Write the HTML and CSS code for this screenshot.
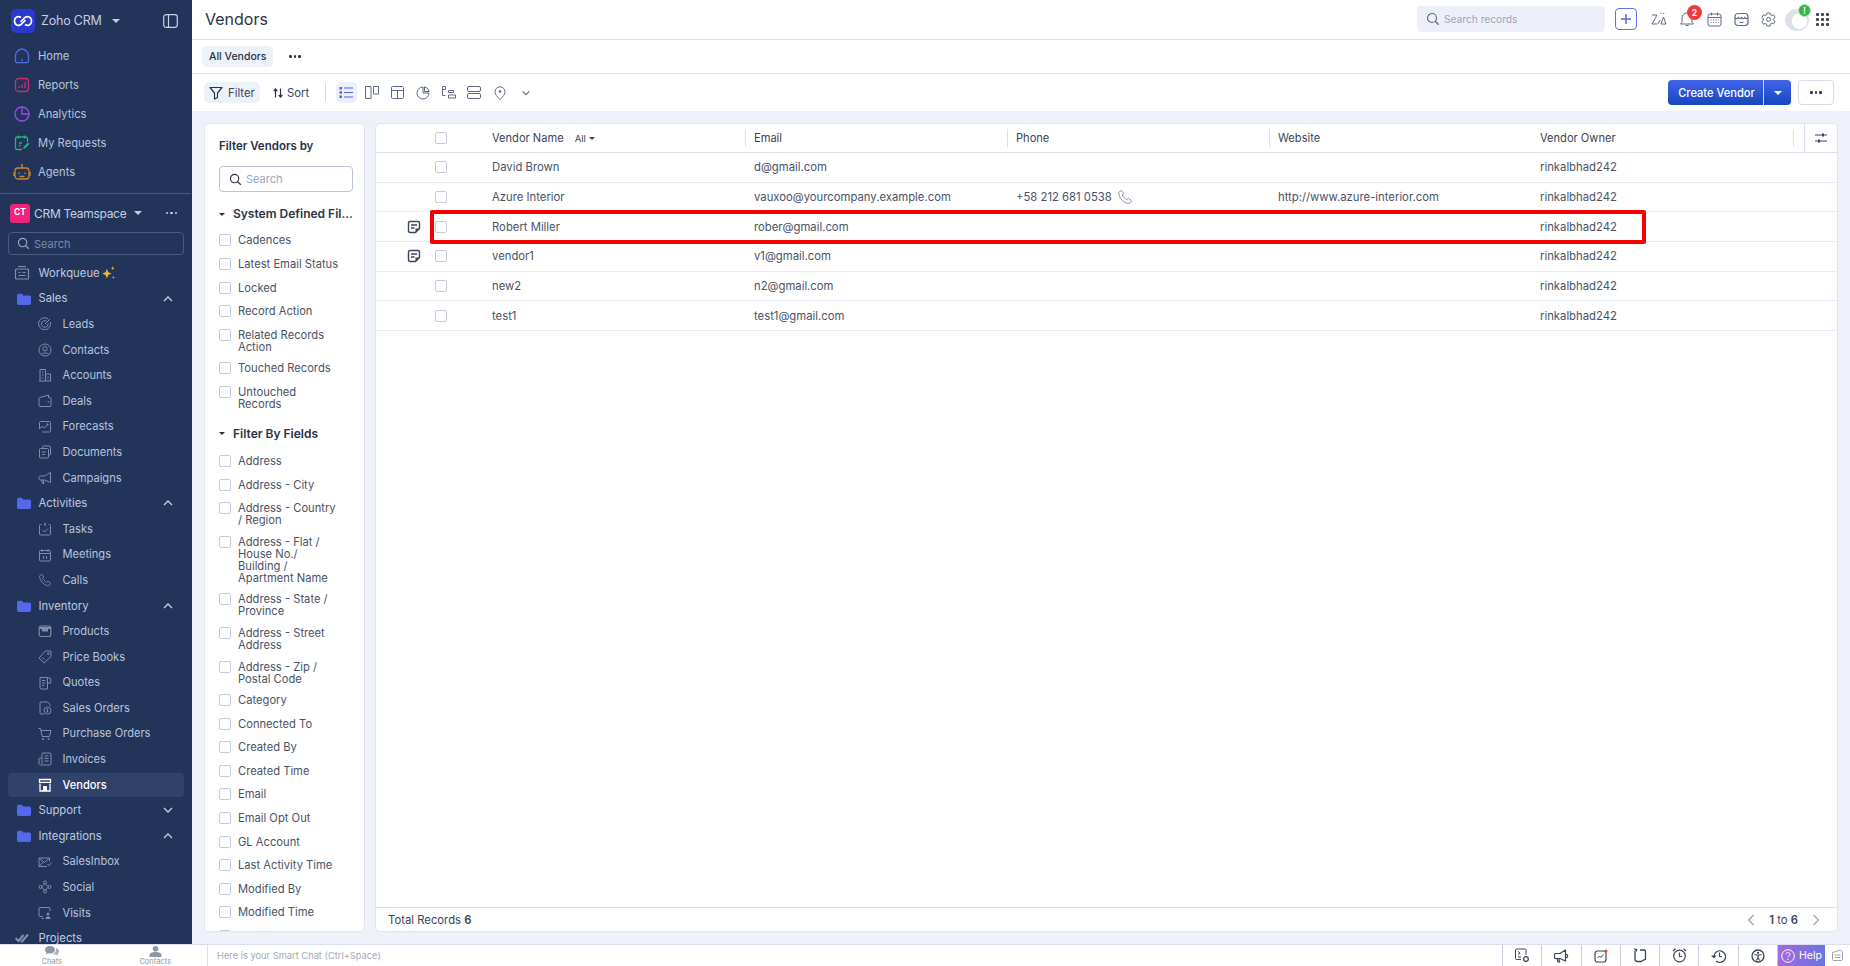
FILE: index.html
```html
<!DOCTYPE html>
<html lang="en">
<head>
<meta charset="utf-8">
<title>Vendors - Zoho CRM</title>
<link rel="stylesheet" href="styles.css">
</head>
<body>
<svg class="defs" width="0" height="0">
<defs>
<symbol id="folder" viewBox="0 0 16 16"><path fill="currentColor" d="M1 4.500c0-1 .6-1.700 1.600-1.700h3.200l1.500 1.600h6c1 0 1.700.7 1.700 1.700v6.200c0 1-.7 1.700-1.700 1.700H2.700c-1 0-1.700-.7-1.700-1.700z"/></symbol>
<symbol id="up" viewBox="0 0 12 12"><path fill="none" stroke="currentColor" stroke-width="1.300" d="M2 8l4-4 4 4"/></symbol>
<symbol id="down" viewBox="0 0 12 12"><path fill="none" stroke="currentColor" stroke-width="1.300" d="M2 4l4 4 4-4"/></symbol>
<symbol id="note" viewBox="0 0 14 14"><path fill="none" stroke="currentColor" stroke-width="1.400" stroke-linejoin="round" d="M3 1.500h8c1 0 1.500.6 1.500 1.500v5.500l-4 4H3c-1 0-1.500-.5-1.500-1.500V3c0-.9.5-1.500 1.500-1.500z"/><path fill="none" stroke="currentColor" stroke-width="1.400" d="M4 5h6M4 8h3.500"/><path fill="currentColor" d="M8.500 12.500V8.500h4z"/></symbol>
<symbol id="search" viewBox="0 0 14 14"><circle cx="6" cy="6" r="4.500" fill="none" stroke="currentColor" stroke-width="1.200"/><path stroke="currentColor" stroke-width="1.300" d="M9.300 9.300l3.400 3.400"/></symbol>
<symbol id="phone" viewBox="0 0 16 16"><path fill="none" stroke="currentColor" d="M2.500 2.500l2-1 2.200 3-1.400 1.500c.8 2 2.500 3.700 4.500 4.600l1.600-1.300 3 2.300-1 2c-.5.8-1.500 1-2.500.8C6.500 13.500 2.800 9.500 1.800 5c-.2-1 .1-2 .7-2.500z"/></symbol>
</defs>
</svg>
<div class="app">
<div class="shell">
<aside class="sidebar">
  <div class="brand">
    <span class="logo"><svg width="24" height="24" viewBox="0 0 24 24"><g fill="none" stroke="#fff" stroke-width="1.700"><path d="M10 8.500C7 6.500 3.500 8 3.500 12s4 5.500 6.500 3.500l4.500-4.500"/><path d="M14 15.500c3 2 6.500.5 6.500-3.500s-4-5.500-6.500-3.500L9.500 13"/></g></svg></span>
    <span class="brand-name">Zoho CRM</span>
    <span class="caret-light"></span>
    <svg class="panel-icon" width="15" height="14" viewBox="0 0 15 14"><rect x=".7" y=".7" width="13.600" height="12.600" rx="2.500" fill="none" stroke="#c9d2e6" stroke-width="1.200"/><path d="M5.500 1v12" stroke="#c9d2e6" stroke-width="1.200"/></svg>
  </div>
  <nav class="top-nav">
    <a class="top-item"><svg class="ic18 c-home" viewBox="0 0 18 18"><path fill="none" stroke="currentColor" stroke-width="1.300" d="M2.500 8.500C2.500 5 6 2 9 2s6.500 3 6.500 6.500V14c0 1-.8 1.700-1.700 1.700H4.200c-1 0-1.700-.7-1.700-1.700zM8 13h2"/></svg>Home</a>
    <a class="top-item"><svg class="ic18 c-rep" viewBox="0 0 18 18"><rect x="2.500" y="2.500" width="13" height="13" rx="3" fill="none" stroke="currentColor" stroke-width="1.300"/><path stroke="currentColor" stroke-width="1.300" d="M6 12v-2M9 12V8.500M12 12V6"/></svg>Reports</a>
    <a class="top-item"><svg class="ic18 c-ana" viewBox="0 0 18 18"><path fill="none" stroke="currentColor" stroke-width="1.300" d="M9 2a7 7 0 1 0 7 7H9z"/><path fill="none" stroke="currentColor" stroke-width="1.300" d="M9 2a7 7 0 0 1 7 7"/></svg>Analytics</a>
    <a class="top-item"><svg class="ic18 c-req" viewBox="0 0 18 18"><path fill="none" stroke="currentColor" stroke-width="1.300" d="M9 15.500H4.500C3.500 15.500 2.500 15 2.500 14V4.500c0-1 1-1.500 2-1.500h8c1 0 2 .5 2 1.500V8M5.500 1.500v3M11.500 1.500v3M6 9h3M6 11.500h1.500"/><path fill="currentColor" d="M10 15l.5-2 4.500-4.500 1.500 1.500-4.500 4.500z"/></svg>My Requests</a>
    <a class="top-item"><svg class="ic18 c-agt" viewBox="0 0 18 18"><rect x="2" y="5" width="14" height="11" rx="3" fill="none" stroke="currentColor" stroke-width="1.300"/><path stroke="currentColor" stroke-width="1.300" d="M9 5V2.500M1 9v4M17 9v4M6 9.500v1.500M12 9.500v1.500M6.500 13.500h5"/><circle cx="9" cy="2" r="1" fill="currentColor"/></svg>Agents</a>
  </nav>
  <div class="team">
    <span class="team-badge">CT</span>
    <span class="team-name">CRM Teamspace</span>
    <span class="caret-light small"></span>
    <span class="dots light"><i></i><i></i><i></i></span>
  </div>
  <div class="side-search"><svg width="13" height="13" class="s-icon"><use href="#search"/></svg>Search</div>
  <nav class="tree">
    <a class="row head"><svg class="ic16 gray" viewBox="0 0 16 16"><path fill="none" stroke="currentColor" stroke-width="1.200" d="M4 1.500h8M2.500 4h11c.6 0 1 .4 1 1v8c0 .6-.4 1-1 1h-11c-.6 0-1-.4-1-1V5c0-.6.400-1 1-1zM4.500 7.500h2M8.500 7.500h3M4.500 10.500h7"/></svg>Workqueue<svg class="spark" width="15" height="15" viewBox="0 0 14 14"><path fill="#e8b923" d="M5.500 3.500l1.300 3.200 3.200 1.300-3.200 1.300-1.300 3.200-1.300-3.200L1 8l3.200-1.300zM11 1l.5 1.500L13 3l-1.500.5L11 5l-.5-1.500L9 3l1.500-.5zM11.500 10l.4 1.100 1.100.4-1.100.4-.4 1.100-.4-1.100-1.100-.4 1.100-.4z"/></svg></a>

    <a class="row head"><svg class="folder"><use href="#folder"/></svg>Sales<svg class="chev"><use href="#up"/></svg></a>
    <a class="row sub"><svg class="ic14" viewBox="0 0 14 14"><path fill="none" stroke="currentColor" d="M10 1.800A6 6 0 1 0 12.300 5M8.500 4.200A3.300 3.300 0 1 0 10 6.500M7 7l5-5"/></svg>Leads</a>
    <a class="row sub"><svg class="ic14" viewBox="0 0 14 14"><circle cx="7" cy="7" r="6" fill="none" stroke="currentColor"/><circle cx="7" cy="5.800" r="2.200" fill="none" stroke="currentColor"/><path fill="none" stroke="currentColor" d="M3.200 11.500c1-2 6.600-2 7.600 0"/></svg>Contacts</a>
    <a class="row sub"><svg class="ic14" viewBox="0 0 14 14"><path fill="none" stroke="currentColor" d="M1 13h12M2 13V1.500h5.500V13M7.500 6H12.500V13M4 4h1.500M4 7h1.500M4 10h1.500M9.500 8.500h1M9.500 10.500h1"/></svg>Accounts</a>
    <a class="row sub"><svg class="ic14" viewBox="0 0 14 14"><path fill="none" stroke="currentColor" d="M1 4.500c0-.6.500-1 1-1l8.500-2.500v2.500H12c.6 0 1 .5 1 1v7c0 .6-.4 1-1 1H2c-.6 0-1-.4-1-1z"/><circle cx="10.300" cy="8" r=".8" fill="currentColor"/></svg>Deals</a>
    <a class="row sub"><svg class="ic14" viewBox="0 0 14 14"><path fill="none" stroke="currentColor" d="M1.500 9V2.500c0-.6.400-1 1-1h9c.6 0 1 .4 1 1v8.500c0 .6-.4 1-1 1H4M1 9l3-2.500L6.500 8 10 4M8.500 4H10v1.500"/></svg>Forecasts</a>
    <a class="row sub"><svg class="ic14" viewBox="0 0 14 14"><path fill="none" stroke="currentColor" d="M4.500 3V2c0-.5.400-1 1-1h6c.6 0 1 .5 1 1v7c0 .6-.4 1-1 1h-1M2.500 3.500h7c.6 0 1 .4 1 1V12c0 .6-.4 1-1 1h-7c-.6 0-1-.4-1-1V4.500c0-.6.400-1 1-1zM4 7h4M4 9.500h3"/></svg>Documents</a>
    <a class="row sub"><svg class="ic14" viewBox="0 0 14 14"><path fill="none" stroke="currentColor" stroke-linejoin="round" d="M12.500 1.500v10L6.500 9H2.500c-.8 0-1.500-.6-1.500-1.500v-1C1 5.600 1.700 5 2.500 5h4zM3.500 9l1 3.500H6L5.200 9"/></svg>Campaigns</a>

    <a class="row head"><svg class="folder"><use href="#folder"/></svg>Activities<svg class="chev"><use href="#up"/></svg></a>
    <a class="row sub"><svg class="ic14" viewBox="0 0 14 14"><path fill="none" stroke="currentColor" d="M3.500 2.500H2.500c-.6 0-1 .4-1 1V12c0 .6.400 1 1 1h9c.6 0 1-.4 1-1V3.500c0-.6-.4-1-1-1h-1M4.500 8l2 2 3.500-3.500"/><path stroke="currentColor" stroke-width="1.400" d="M7 .8v3"/></svg>Tasks</a>
    <a class="row sub"><svg class="ic14" viewBox="0 0 14 14"><rect x="1.500" y="2.500" width="11" height="10.500" rx="1" fill="none" stroke="currentColor"/><path fill="none" stroke="currentColor" d="M1.500 5.500h11M4 1v3M10 1v3M5.500 8v3M8.500 8v3"/></svg>Meetings</a>
    <a class="row sub"><svg class="ic14" viewBox="0 0 16 16"><use href="#phone"/></svg>Calls</a>

    <a class="row head"><svg class="folder"><use href="#folder"/></svg>Inventory<svg class="chev"><use href="#up"/></svg></a>
    <a class="row sub"><svg class="ic14" viewBox="0 0 14 14"><rect x="1.200" y="2" width="11.600" height="10.500" rx="2" fill="none" stroke="currentColor" stroke-width="1.200"/><path fill="currentColor" d="M1.500 3h11v2h-2.500v2.500H4V5H1.500z"/></svg>Products</a>
    <a class="row sub"><svg class="ic14" viewBox="0 0 14 14"><path fill="none" stroke="currentColor" stroke-linejoin="round" d="M7.500 1H13v5.500L6 13 1 8zM4.500 7.500l2 2"/><circle cx="10.300" cy="3.700" r=".9" fill="none" stroke="currentColor"/></svg>Price Books</a>
    <a class="row sub"><svg class="ic14" viewBox="0 0 14 14"><path fill="none" stroke="currentColor" d="M2 1.500h7.500V13H3c-.6 0-1-.4-1-1zM9.500 2H12c.6 0 .8.400.8 1v4H9.500M4 4.500h3.500M4 7h3.500M4 9.500h2"/></svg>Quotes</a>
    <a class="row sub"><svg class="ic14" viewBox="0 0 14 14"><path fill="none" stroke="currentColor" d="M6 13H3c-.6 0-1-.4-1-1V2c0-.6.400-1 1-1h6.500L12 3.500V5"/><circle cx="9.500" cy="9.500" r="3.500" fill="none" stroke="currentColor"/><path stroke="currentColor" stroke-width=".9" d="M9.500 7.500v4M8.500 8.600h1.700M8.600 10.400h1.700"/></svg>Sales Orders</a>
    <a class="row sub"><svg class="ic14" viewBox="0 0 14 14"><path fill="none" stroke="currentColor" d="M.5 1.500h2L4.200 9.500h7.300L13 3.500H3"/><circle cx="5" cy="12" r="1" fill="currentColor"/><circle cx="10.500" cy="12" r="1" fill="currentColor"/></svg>Purchase Orders</a>
    <a class="row sub"><svg class="ic14" viewBox="0 0 14 14"><path fill="none" stroke="currentColor" d="M4 6V2c0-.6.400-1 1-1h7c.6 0 1 .4 1 1v10c0 .6-.4 1-1 1H3c-1 0-2-.6-2-1.500V7c0-.6.400-1 1-1h2v6M6.500 4h4M6.500 6.500h4M6.500 9h4"/></svg>Invoices</a>
    <a class="row sub active"><svg class="ic14" viewBox="0 0 14 14"><path fill="none" stroke="currentColor" stroke-width="1.300" d="M2 5.500V13h10V5.500M.8 1.500h12.400M1.500 1.500v2.800h11V1.500"/><path fill="currentColor" d="M5 8h4v5H5z"/></svg>Vendors</a>

    <a class="row head"><svg class="folder"><use href="#folder"/></svg>Support<svg class="chev"><use href="#down"/></svg></a>
    <a class="row head"><svg class="folder"><use href="#folder"/></svg>Integrations<svg class="chev"><use href="#up"/></svg></a>
    <a class="row sub"><svg class="ic14" viewBox="0 0 14 14"><path fill="none" stroke="currentColor" d="M1 3h10.500v3M1 3v8.500h8M1 3l5.500 4.500L11.500 3M1 11.500l4-4.500M9.500 9l1.500 1.500 2.500-3"/></svg>SalesInbox</a>
    <a class="row sub"><svg class="ic14" viewBox="0 0 14 14"><path fill="none" stroke="currentColor" d="M7 3.500L10.500 7 7 10.500 3.500 7z"/><circle cx="7" cy="2.500" r="1.500" fill="none" stroke="currentColor"/><circle cx="7" cy="11.500" r="1.500" fill="none" stroke="currentColor"/><circle cx="2.500" cy="7" r="1.500" fill="none" stroke="currentColor"/><circle cx="11.500" cy="7" r="1.500" fill="none" stroke="currentColor"/></svg>Social</a>
    <a class="row sub"><svg class="ic14" viewBox="0 0 14 14"><path fill="none" stroke="currentColor" d="M5 10.500H2c-.6 0-1-.4-1-1V2.500c0-.6.400-1 1-1h9c.6 0 1 .4 1 1v2.500M3.500 12.500H6"/><circle cx="10" cy="8" r="1.500" fill="currentColor"/><path fill="currentColor" d="M7.500 13c0-2 1-2.500 2.500-2.500s2.500.5 2.500 2.500z"/></svg>Visits</a>
    <a class="row head"><svg class="ic16 gray" viewBox="0 0 16 16"><path fill="none" stroke="currentColor" stroke-width="2" d="M1.500 8l3 3 5-6M7 10.500l1 1 6-7"/></svg>Projects</a>
  </nav>
</aside>

<main class="main">
  <header class="topbar">
    <h1 class="title">Vendors</h1>
    <div class="top-search"><svg width="14" height="14" class="ts-icon"><use href="#search"/></svg>Search records</div>
    <span class="plus"><svg width="12" height="12" viewBox="0 0 12 12"><path stroke="#5368e8" stroke-width="1.500" d="M6 1v10M1 6h10"/></svg></span>
    <div class="top-icons">
      <svg width="16" height="14" viewBox="0 0 16 14"><path fill="none" stroke="currentColor" d="M1 3h5L1 12h5M10 12l2.500-7 2.500 7zM7 12l2-4M9.500 1l1 1M13 1l-.5 1"/></svg>
      <span class="bell"><svg width="16" height="16" viewBox="0 0 16 16"><path fill="none" stroke="currentColor" d="M3 11.500V7a5 5 0 0 1 10 0v4.500l1.500 1.500h-13zM6.500 14.500h3"/></svg><b class="badge">2</b></span>
      <svg width="15" height="15" viewBox="0 0 15 15"><rect x="1" y="2" width="13" height="12" rx="2" fill="none" stroke="currentColor"/><path fill="none" stroke="currentColor" d="M1 5.500h13M4.500 .5v3M10.500 .5v3"/><path stroke="currentColor" stroke-dasharray="1 1.500" d="M3.500 8h8M3.500 10.500h8"/></svg>
      <svg width="15" height="15" viewBox="0 0 15 15"><rect x="1" y="1.500" width="13" height="12" rx="3" fill="none" stroke="currentColor" stroke-width="1.200"/><path fill="none" stroke="currentColor" stroke-width="1.200" d="M1 5.500c1 1.500 2.500 1.500 3.200 0 .8 1.500 2.500 1.500 3.300 0 .8 1.500 2.500 1.500 3.300 0 .7 1.500 2.200 1.500 3.200 0M5.500 10.500h4"/></svg>
      <svg width="15" height="15" viewBox="0 0 15 15"><path fill="none" stroke="currentColor" stroke-linejoin="round" d="M6 1h3l.4 1.800 1.500.7 1.700-.7 1.500 2.500-1.400 1.200v1.600l1.400 1.200-1.500 2.500-1.700-.7-1.500.7L9 14H6l-.4-1.800-1.500-.7-1.700.7-1.500-2.500 1.400-1.200V6.900L.9 5.300l1.500-2.500 1.700.7 1.500-.7z"/><circle cx="7.500" cy="7.500" r="2" fill="none" stroke="currentColor"/></svg>
      <span class="avatar"><i class="avatar-shape"></i><b class="avatar-badge">!</b></span>
      <span class="apps"><i></i><i></i><i></i><i></i><i></i><i></i><i></i><i></i><i></i></span>
    </div>
  </header>

  <div class="viewbar">
    <span class="view-pill">All Vendors</span>
    <span class="dots"><i></i><i></i><i></i></span>
  </div>

  <div class="toolbar">
    <span class="tool-pill"><svg width="14" height="14" viewBox="0 0 14 14"><path fill="none" stroke="#2a3345" stroke-width="1.200" stroke-linejoin="round" d="M1 1.500h12L8.500 7v4.500l-3 1.500V7z"/></svg>Filter</span>
    <span class="tool-sort"><svg width="10" height="10" viewBox="0 0 10 10"><path fill="none" stroke="#2a3345" stroke-width="1.200" d="M2.500 9.500V1M.7 3l1.800-2 1.800 2M7.500 .5V9M5.700 7l1.800 2 1.800-2"/></svg>Sort</span>
    <span class="tool-sep"></span>
    <div class="views">
      <span class="view current"><svg width="14" height="13" viewBox="0 0 14 13"><path fill="#4f63e6" d="M.5 1h2.500v2.500H.5zM.5 5.200h2.500v2.500H.5zM.5 9.500h2.500V12H.5z"/><path stroke="#4f63e6" stroke-width="1.200" d="M5 2h9M5 6.500h9M5 11h9"/></svg></span>
      <span class="view"><svg width="14" height="13" viewBox="0 0 14 13"><path fill="none" stroke="#5e6a84" d="M.5.500h5.500v12H.5zM8.500.500H13.500v7.500H8.500z"/></svg></span>
      <span class="view"><svg width="13" height="13" viewBox="0 0 13 13"><rect x=".5" y=".5" width="12" height="12" rx="1" fill="none" stroke="#5e6a84"/><path stroke="#5e6a84" d="M.5 4.500h12M6.500 4.500v8"/></svg></span>
      <span class="view"><svg width="14" height="14" viewBox="0 0 14 14"><path fill="none" stroke="#5e6a84" d="M7 1a6 6 0 1 0 6 6H7zM8.500.8a6 6 0 0 1 4.700 4.700H8.500z"/></svg></span>
      <span class="view"><svg width="14" height="13" viewBox="0 0 14 13"><path fill="none" stroke="#5e6a84" d="M.5 1v8.500h3M.5 .5h3v3h-3zM6.500 4.500h5v2h-5zM6.500 9h7v3h-7z"/></svg></span>
      <span class="view"><svg width="14" height="13" viewBox="0 0 14 13"><rect x=".5" y=".5" width="13" height="5" rx="1.500" fill="none" stroke="#5e6a84"/><rect x=".5" y="7.500" width="13" height="5" rx="1.500" fill="none" stroke="#5e6a84"/></svg></span>
      <span class="view"><svg width="12" height="14" viewBox="0 0 12 14"><path fill="none" stroke="#5e6a84" d="M6 13.500C3 10.500 1 8.500 1 5.800a5 5 0 0 1 10 0c0 2.700-2 4.700-5 7.700z"/><circle cx="6" cy="5.500" r="1.300" fill="#5e6a84"/></svg></span>
      <span class="view"><svg width="10" height="10"><use href="#down"/></svg></span>
    </div>
    <div class="create">
      <span class="create-main">Create Vendor</span>
      <span class="create-arrow"><i></i></span>
    </div>
    <span class="more"><span class="dots"><i></i><i></i><i></i></span></span>
  </div>

  <div class="content">
    <section class="filters">
      <h2 class="f-title">Filter Vendors by</h2>
      <div class="f-search"><svg width="13" height="13"><use href="#search"/></svg>Search</div>
      <h3 class="f-group sys"><i class="caret-dark"></i>System Defined Fil...</h3>
      <label class="f-item"><i class="cb"></i><span>Cadences</span></label>
      <label class="f-item"><i class="cb"></i><span>Latest Email Status</span></label>
      <label class="f-item"><i class="cb"></i><span>Locked</span></label>
      <label class="f-item"><i class="cb"></i><span>Record Action</span></label>
      <label class="f-item"><i class="cb"></i><span>Related Records<br>Action</span></label>
      <label class="f-item"><i class="cb"></i><span>Touched Records</span></label>
      <label class="f-item"><i class="cb"></i><span>Untouched<br>Records</span></label>
      <h3 class="f-group fields"><i class="caret-dark"></i>Filter By Fields</h3>
      <label class="f-item"><i class="cb"></i><span>Address</span></label>
      <label class="f-item"><i class="cb"></i><span>Address - City</span></label>
      <label class="f-item"><i class="cb"></i><span>Address - Country<br>/ Region</span></label>
      <label class="f-item"><i class="cb"></i><span>Address - Flat /<br>House No./<br>Building /<br>Apartment Name</span></label>
      <label class="f-item"><i class="cb"></i><span>Address - State /<br>Province</span></label>
      <label class="f-item"><i class="cb"></i><span>Address - Street<br>Address</span></label>
      <label class="f-item"><i class="cb"></i><span>Address - Zip /<br>Postal Code</span></label>
      <label class="f-item"><i class="cb"></i><span>Category</span></label>
      <label class="f-item"><i class="cb"></i><span>Connected To</span></label>
      <label class="f-item"><i class="cb"></i><span>Created By</span></label>
      <label class="f-item"><i class="cb"></i><span>Created Time</span></label>
      <label class="f-item"><i class="cb"></i><span>Email</span></label>
      <label class="f-item"><i class="cb"></i><span>Email Opt Out</span></label>
      <label class="f-item"><i class="cb"></i><span>GL Account</span></label>
      <label class="f-item"><i class="cb"></i><span>Last Activity Time</span></label>
      <label class="f-item"><i class="cb"></i><span>Modified By</span></label>
      <label class="f-item"><i class="cb"></i><span>Modified Time</span></label>
      <label class="f-item"><i class="cb"></i><span>Phone</span></label>
    </section>

    <section class="table-card">
      <div class="t-row t-head">
        <span></span>
        <span><i class="cb"></i></span>
        <span class="name-head">Vendor Name<em class="all">All<i class="caret-mini"></i></em></span>
        <span class="th sep">Email</span>
        <span class="th sep">Phone</span>
        <span class="th">Website</span>
        <span class="th sep owner">Vendor Owner</span>
        <span class="cfg"><svg width="14" height="12" viewBox="0 0 14 12"><path stroke="#3b4458" d="M1 3h12M1 9h12"/><path fill="#3b4458" d="M8 1.500h2v3H8zM4 7.500h2v3H4z"/></svg></span>
      </div>
      <div class="t-body">
        <div class="t-row"><span></span><span><i class="cb"></i></span><span>David Brown</span><span class="td">d@gmail.com</span><span class="td"></span><span class="td"></span><span class="td">rinkalbhad242</span><span></span></div>
        <div class="t-row"><span></span><span><i class="cb"></i></span><span>Azure Interior</span><span class="td">vauxoo@yourcompany.example.com</span><span class="td">+58 212 681 0538<svg class="call" width="16" height="16"><use href="#phone"/></svg></span><span class="td">http://www.azure-interior.com</span><span class="td">rinkalbhad242</span><span></span></div>
        <div class="t-row"><span class="nt"><svg width="14" height="14"><use href="#note"/></svg></span><span><i class="cb"></i></span><span>Robert Miller</span><span class="td">rober@gmail.com</span><span class="td"></span><span class="td"></span><span class="td">rinkalbhad242</span><span></span></div>
        <div class="t-row"><span class="nt"><svg width="14" height="14"><use href="#note"/></svg></span><span><i class="cb"></i></span><span>vendor1</span><span class="td">v1@gmail.com</span><span class="td"></span><span class="td"></span><span class="td">rinkalbhad242</span><span></span></div>
        <div class="t-row"><span></span><span><i class="cb"></i></span><span>new2</span><span class="td">n2@gmail.com</span><span class="td"></span><span class="td"></span><span class="td">rinkalbhad242</span><span></span></div>
        <div class="t-row"><span></span><span><i class="cb"></i></span><span>test1</span><span class="td">test1@gmail.com</span><span class="td"></span><span class="td"></span><span class="td">rinkalbhad242</span><span></span></div>
      </div>
      <div class="t-foot">
        <span>Total Records <b>6</b></span>
        <span class="pager"><svg width="10" height="12" viewBox="0 0 10 12"><path fill="none" stroke="#9aa3b5" stroke-width="1.200" d="M7.500 1L2.500 6l5 5"/></svg><span class="pg"><b>1</b> to <b>6</b></span><svg width="10" height="12" viewBox="0 0 10 12"><path fill="none" stroke="#9aa3b5" stroke-width="1.200" d="M2.500 1l5 5-5 5"/></svg></span>
      </div>
      <div class="highlight"></div>
    </section>
  </div>
</main>
</div>

<footer class="bottom">
  <div class="b-left">
    <span class="b-tab"><svg width="14" height="11" viewBox="0 0 14 11"><path fill="#8e97a8" d="M5 0c3 0 5 1.500 5 3.700S8 7.500 5 7.500c-.7 0-1.400-.1-2-.3L.8 8.500l.6-2.200C.5 5.600 0 4.700 0 3.700 0 1.500 2 0 5 0z"/><path fill="#a5adbb" d="M11 2c2 .5 3 1.800 3 3.300 0 1-.5 1.800-1.300 2.400l.4 1.800-1.900-1.100c-1 .3-2.700.2-3.700-.4 2.500-.5 4-2.300 3.500-6z"/></svg>Chats</span>
    <span class="b-tab"><svg width="13" height="11" viewBox="0 0 13 11"><circle cx="6.500" cy="2.800" r="2.800" fill="#8e97a8"/><path fill="#8e97a8" d="M.5 11V9c0-2 2.500-3 6-3s6 1 6 3v2z"/></svg>Contacts</span>
  </div>
  <div class="b-chat">Here is your Smart Chat (Ctrl+Space)</div>
  <div class="b-tools">
    <span class="b-cell"><svg width="16" height="15" viewBox="0 0 16 15"><path fill="none" stroke="#3b4458" d="M7 11.500H2.500c-.6 0-1-.4-1-1V2c0-.6.400-1 1-1h8.500c.6 0 1 .4 1 1v5M4 3.500l2 1.500-2 1.500M4 9h3"/><circle cx="12" cy="11" r="2.300" fill="none" stroke="#3b4458" stroke-width="1.300"/></svg></span>
    <span class="b-cell"><svg width="16" height="14" viewBox="0 0 16 14"><path fill="none" stroke="#3b4458" stroke-width="1.200" stroke-linejoin="round" d="M12.500 1v11L7 9.500H2.500c-.6 0-1-.4-1-1v-3c0-.6.400-1 1-1H7zM4 9.500l1 3.500h1.500L6 9.500M12.500 5l2 1v2l-2 1"/></svg></span>
    <span class="b-cell"><svg width="14" height="14" viewBox="0 0 14 14"><rect x="1" y="2" width="11" height="11" rx="2.500" fill="none" stroke="#3b4458" stroke-width="1.200"/><path fill="none" stroke="#3b4458" d="M3.500 9L5.500 7l1.500 1.500L9.500 5.500"/><circle cx="12" cy="2" r="1.500" fill="#e8453c"/></svg></span>
    <span class="b-cell"><svg width="14" height="15" viewBox="0 0 14 15"><path fill="none" stroke="#3b4458" stroke-width="1.300" d="M2 3v8c0 1.500 1 2.500 2.500 2.500H8L12.500 11V3.500c0-1-.5-1.500-1.500-1.500H7"/><path fill="#3b4458" d="M.5 .5l4 .5-1 3z"/></svg></span>
    <span class="b-cell"><svg width="15" height="15" viewBox="0 0 15 15"><circle cx="7.500" cy="8" r="5.800" fill="none" stroke="#3b4458" stroke-width="1.200"/><path fill="none" stroke="#3b4458" d="M7.500 4.500V8.500H10M1 3l2.500-2.300M14 3L11.500 .7" stroke-width="1.200"/></svg></span>
    <span class="b-cell"><svg width="15" height="14" viewBox="0 0 15 14"><path fill="none" stroke="#3b4458" stroke-width="1.200" d="M3 7a5.800 5.800 0 1 1 2 5M8.500 3.500V7.500H11"/><path fill="#3b4458" d="M0 6.500h5.500L3 9.500z"/></svg></span>
    <span class="b-cell"><svg width="14" height="14" viewBox="0 0 14 14"><circle cx="7" cy="7" r="6" fill="none" stroke="#3b4458" stroke-width="1.300"/><circle cx="7" cy="3.800" r="1.100" fill="#3b4458"/><path fill="none" stroke="#3b4458" stroke-width="1.100" d="M3.500 5.500L7 6.300l3.500-.8M7 6.300V8.500L5.500 11.500M7 8.500l1.500 3"/></svg></span>
    <span class="help"><svg width="14" height="14" viewBox="0 0 14 14"><circle cx="7" cy="7" r="6.300" fill="none" stroke="#fff"/><path fill="none" stroke="#fff" d="M5 5.300C5 4 6 3.500 7 3.500S9 4.200 9 5.300C9 6.800 7 6.800 7 8.300"/><circle cx="7" cy="10.200" r=".7" fill="#fff"/></svg>Help</span>
    <svg class="b-last" width="13" height="13" viewBox="0 0 13 13"><path fill="none" stroke="#9aa3b5" d="M1.500 3.500l8-2.500 2 2v7c0 1-.5 1.500-1.500 1.500H3c-1 0-1.500-.5-1.500-1.500zM3.500 6h6M3.500 8.500h6"/></svg>
  </div>
</footer>
</div>
</body>
</html>
```
FILE: styles.css
```css
* { box-sizing: border-box; }
html, body { margin: 0; height: 100%; overflow: hidden; }
body { font-family: Inter, "Noto Sans", sans-serif; font-size: 11.3px; color: #3b4458; background: #fff; }
.defs { position: absolute; }
i, em { font-style: normal; }
.app { height: 966px; display: flex; flex-direction: column; }
.shell { height: 944px; display: flex; }

.sidebar { width: 192px; flex: none; background: #22345a; color: #b8c4dd; overflow: hidden; }
.brand { height: 41px; display: flex; align-items: center; padding-left: 11px; }
.logo { width: 24px; height: 24px; border-radius: 5px; background: #2a3ad0; display: flex; }
.brand-name { margin-left: 6px; font-size: 12.5px; letter-spacing: -.2px; color: #c4cfe4; }
.caret-light { margin-left: 10px; width: 0; height: 0; border: 4px solid transparent; border-top: 4px solid #c4cfe4; border-bottom: 0; }
.caret-light.small { margin-left: 8px; border-width: 4px 4px 0; }
.panel-icon { margin-left: auto; margin-right: 14px; }
.top-nav { height: 153px; border-bottom: 1px solid #4a5a80; padding-top: 1px; margin-right: 1px; font-size: 11.2px; }
.top-item { height: 28.8px; display: flex; align-items: center; padding-left: 13px; gap: 7px; }
.ic18 { width: 18px; height: 18px; flex: none; }
.c-home { color: #4f6fe6; }
.c-rep { color: #c92f72; }
.c-ana { color: #9a4ce6; }
.c-req { color: #26b37c; }
.c-agt { color: #cf8429; }
.team { height: 38px; display: flex; align-items: center; padding-left: 10px; }
.team-badge { width: 20px; height: 19px; border-radius: 3px; background: #f0247d; color: #fff; font-size: 8.5px; font-weight: 700; display: flex; align-items: center; justify-content: center; padding-bottom: 2px; }
.team-name { margin-left: 4px; font-size: 12px; letter-spacing: -.3px; color: #c4cfe4; }
.dots { display: inline-flex; gap: 2px; color: #2a3345; }
.dots i { width: 2.5px; height: 2.5px; border-radius: 50%; background: currentColor; }
.dots.light { color: #c4cfe4; margin-left: auto; margin-right: 15px; }
.side-search { height: 23px; margin: 0 8px; border: 1px solid #4a5a80; border-radius: 4px; display: flex; align-items: center; padding-left: 8px; gap: 4px; font-size: 11px; color: #7d8aa8; }
.s-icon { color: #9eaac4; }
.tree { padding-top: 5px; }
.row { height: 25.6px; display: flex; align-items: center; position: relative; margin: 0 8px; border-radius: 4px; }
.row.head { padding-left: 30.5px; color: #c0cbe2; }
.row .folder { position: absolute; left: 8px; top: 5px; width: 16px; height: 16px; color: #5567ea; }
.row .ic16 { position: absolute; left: 6px; top: 5px; width: 16px; height: 16px; }
.gray { color: #8390ad; }
.spark { margin-left: 1px; }
.chev { position: absolute; right: 10px; top: 7px; width: 12px; height: 12px; color: #c4cfe4; }
.row.sub { padding-left: 54.5px; font-size: 11.1px; }
.row.sub .ic14 { position: absolute; left: 30px; top: 6px; width: 14px; height: 14px; color: #7f8cab; }
.row.active { background: #30416a; color: #fff; font-weight: 500; height: 24px; margin-top: .8px; margin-bottom: .8px; }
.row.active .ic14 { color: #fff; top: 5px; }

.main { flex: 1; min-width: 0; display: flex; flex-direction: column; }
.topbar { height: 40px; flex: none; border-bottom: 1px solid #dcdfeb; display: flex; align-items: center; padding: 0 0 1px 13px; }
.title { margin: 0 0 1px; font-size: 16px; font-weight: 400; color: #2a3345; flex: 1; }
.top-search { width: 188px; height: 26px; border-radius: 4px; background: #edf0f8; display: flex; align-items: center; padding-left: 9px; gap: 4px; font-size: 10.2px; color: #9ca5ba; }
.ts-icon { color: #5e6a84; }
.plus { margin-left: 10px; width: 22px; height: 22px; border: 1px solid #5f72ea; border-radius: 4px; display: flex; align-items: center; justify-content: center; }
.top-icons { display: flex; align-items: center; margin-left: 14px; margin-right: 21px; gap: 12px; color: #5e6a84; }
.bell { position: relative; display: flex; }
.badge { position: absolute; left: 8px; top: -6px; width: 15px; height: 15px; background: #ee3a3f; color: #fff; border-radius: 50%; font-size: 8.5px; display: flex; align-items: center; justify-content: center; }
.avatar { width: 24px; height: 24px; position: relative; margin-left: -3px; margin-right: -5px; }
.avatar-shape { position: absolute; left: 0; top: 2px; width: 24px; height: 22px; border-radius: 50%; background: radial-gradient(circle at 60% 55%, #fff 0 40%, #dde1ea 42%); }
.avatar-badge { position: absolute; left: 13px; top: -3px; width: 13px; height: 13px; border-radius: 50%; background: #32b54a; color: #fff; font-size: 8.5px; display: flex; align-items: center; justify-content: center; border: 1px solid #b9e8c2; }
.apps { display: grid; grid-template-columns: repeat(3, 3px); gap: 2px; }
.apps i { width: 3px; height: 3px; background: #3b4458; border-radius: 1px; }

.viewbar { height: 34px; flex: none; border-bottom: 1px solid #dcdfeb; display: flex; align-items: center; padding-left: 10px; }
.view-pill { height: 21px; padding: 0 7px; background: #edf1fa; border-radius: 5px; display: flex; align-items: center; font-size: 10.5px; font-weight: 500; color: #2a3345; }
.viewbar .dots { margin-left: 16px; }

.toolbar { height: 37px; flex: none; display: flex; align-items: center; padding-left: 12px; padding-right: 16px; }
.tool-pill { height: 21px; width: 56px; background: #edf1fa; border-radius: 5px; display: flex; align-items: center; padding-left: 5px; gap: 5px; color: #3b4458; }
.tool-sort { margin-left: 13px; display: flex; align-items: center; gap: 4px; color: #3b4458; }
.tool-sep { margin-left: 16px; width: 1px; height: 19px; background: #d5d9e5; }
.views { display: flex; margin-left: 9.6px; }
.view { width: 25.6px; height: 21px; display: flex; align-items: center; justify-content: center; color: #5e6a84; }
.view.current { width: 21px; background: #edf0fc; border-radius: 5px; margin-right: 2.4px; }
.create { margin-left: auto; display: flex; height: 25px; color: #fff; border-radius: 4px; overflow: hidden; background: linear-gradient(#4165e8, #1547be); }
.create-main { width: 95px; display: flex; align-items: center; justify-content: center; font-size: 11.1px; font-weight: 500; padding-left: 2px; }
.create-arrow { width: 28px; border-left: 1px solid #c8d4f4; display: flex; align-items: center; justify-content: center; }
.create-arrow i { border: 4px solid transparent; border-top-color: #fff; border-bottom: 0; }
.more { margin-left: 7px; width: 36px; height: 25px; border: 1px solid #d8dce8; border-radius: 4px; display: flex; align-items: center; justify-content: center; }

.content { flex: 1; min-height: 0; background: #eef1f9; display: flex; padding: 12px; gap: 10px; }
.filters { width: 161px; flex: none; height: 100%; background: #fff; border: 1px solid #e0e3f0; border-radius: 5px; padding: 0 0 0 14px; overflow: hidden; }
.f-title { margin: 15px 0 0; font-size: 11.5px; line-height: 14px; font-weight: 600; color: #2a3345; }
.f-search { width: 134px; height: 26px; margin-top: 13px; border: 1px solid #bfc3d4; border-radius: 4px; display: flex; align-items: center; padding-left: 9px; gap: 4px; font-size: 11px; color: #9ca5ba; }
.f-search svg { color: #2a3345; }
.f-group { margin: 0; display: flex; align-items: center; font-size: 12px; font-weight: 600; color: #2a3345; line-height: 16px; white-space: nowrap; }
.sys { margin-top: 14px; margin-bottom: 7.6px; }
.fields { margin-top: 11px; margin-bottom: 8.4px; }
.caret-dark { width: 0; height: 0; border: 3.5px solid transparent; border-top-color: #2a3345; border-bottom: 0; margin-right: 8px; }
.f-item { display: flex; min-height: 23.6px; padding: 4.8px 0; line-height: 12px; gap: 7px; font-size: 11.2px; color: #4a5266; }
.cb { display: block; width: 12px; height: 12px; border: 1px solid #c6c9d9; border-radius: 2px; background: #fff; flex: none; }

.table-card { flex: 1; min-width: 0; height: 100%; background: #fff; border: 1px solid #e0e3f0; border-radius: 5px; display: flex; flex-direction: column; position: relative; }
.t-row { display: grid; grid-template-columns: 59px 57px 254px 262px 262px 262px 272px 1fr; height: 29.7px; align-items: center; border-bottom: 1px solid #eceef5; color: #4a5266; white-space: nowrap; }
.t-head { height: 29px; flex: none; border-bottom: 1px solid #dcdfeb; color: #3b4458; font-size: 11.1px; }
.t-body { flex: 1; }
.th, .td { padding-left: 8px; display: flex; align-items: center; height: 100%; }
.th.sep { position: relative; }
.th.sep::after { content: ""; position: absolute; right: 0; top: 5px; bottom: 5px; width: 1px; background: #dcdfeb; }
.th.owner::after { right: 10px; }
.name-head { position: relative; display: flex; align-items: center; height: 100%; }
.name-head::after { content: ""; position: absolute; right: 0; top: 5px; bottom: 5px; width: 1px; background: #dcdfeb; }
.all { margin-left: 11px; font-size: 9.5px; display: flex; align-items: center; gap: 3px; }
.caret-mini { border: 3px solid transparent; border-top-color: #3b4458; border-bottom: 0; }
.cfg { height: 100%; border-left: 1px solid #dcdfeb; display: flex; align-items: center; justify-content: center; }
.nt { padding-left: 31px; display: flex; color: #3b4458; }
.call { margin-left: 5px; color: #8a93a6; }
.t-foot { height: 24px; flex: none; border-top: 1px solid #dcdfeb; display: flex; align-items: center; justify-content: space-between; padding: 0 16px 0 12px; }
.t-foot b { font-weight: 600; }
.pager { display: flex; align-items: center; gap: 13px; }
.pg { color: #3b4458; }
.highlight { position: absolute; left: 54px; top: 86px; width: 1216px; height: 34px; border: 4px solid #f40000; border-radius: 2px; }

.bottom { height: 22px; flex: none; display: flex; align-items: stretch; border-top: 1px solid #dcdfeb; background: #fff; }
.b-left { width: 208px; flex: none; border-right: 1px solid #dcdfeb; display: flex; }
.b-tab { width: 50%; display: flex; flex-direction: column; align-items: center; font-size: 7.5px; line-height: 9px; color: #8e97a8; padding-top: 1px; }
.b-chat { padding-left: 9px; font-size: 9.3px; color: #a4a9b6; line-height: 21px; }
.b-tools { margin-left: auto; display: flex; align-items: stretch; }
.b-cell { width: 39.3px; border-left: 1px solid #c9cddb; display: flex; align-items: center; justify-content: center; }
.help { width: 48px; display: flex; align-items: center; justify-content: center; gap: 4px; color: #fff; font-size: 10.5px; background: linear-gradient(90deg, #a268dc, #6c74e4); border-left: 1px solid #c9cddb; }
.b-last { align-self: center; margin: 0 6px; }
```
